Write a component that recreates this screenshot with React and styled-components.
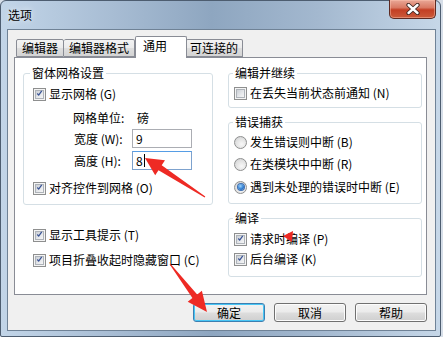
import React from 'react';
import styled, { createGlobalStyle } from 'styled-components';

const GlobalStyle = createGlobalStyle`
	html, body {
		margin: 0;
		padding: 0;
		background: #d6dee8;
	}
	body {
		font-family: "Noto Sans CJK SC", "Liberation Sans", sans-serif;
		font-size: 12px;
		color: #000;
	}
`;

const Stage = styled.div`
	position: relative;
	width: 443px;
	height: 337px;
	overflow: hidden;
`;

const Window = styled.div`
	width: 441px;
	height: 337px;
	box-sizing: border-box;
	display: flex;
	flex-direction: column;
	border: 1px solid #4d5d70;
	border-radius: 6px 6px 2px 2px;
	padding: 0 4px 5px 6px;
	background: linear-gradient(90deg, #c2d5e8 0%, #a8bdd4 25%, #8ea6c0 48%, #a3b8cf 72%, #c6d7e8 100%);
`;

const TitleBar = styled.div`
	height: 28px;
	display: flex;
	justify-content: space-between;
	align-items: flex-start;
	flex-shrink: 0;
`;

const Title = styled.span`
	margin-top: 6px;
	padding-left: 1px;
	font-size: 12px;
	line-height: 16px;
	color: #000;
	text-shadow: 0 0 6px rgba(255, 255, 255, 0.9);
`;

const CloseButton = styled.div`
	width: 47px;
	height: 19px;
	margin-top: -1px;
	box-sizing: border-box;
	display: flex;
	align-items: center;
	justify-content: center;
	border: 1px solid #5d2a22;
	border-top: none;
	border-radius: 0 0 5px 5px;
	background: linear-gradient(180deg, #e9a897 0%, #d97a64 42%, #c33f24 55%, #cb5a3a 100%);
	box-shadow: inset 0 0 0 1px rgba(255, 200, 180, 0.45);
`;

const Client = styled.div`
	flex: 1;
	display: flex;
	flex-direction: column;
	border: 1px solid #6f8296;
	background: #f0f0f0;
	padding: 6px 8px 0 6px;
`;

const TabStrip = styled.div`
	display: flex;
	align-items: flex-end;
	height: 22px;
	margin-left: 2px;
`;

const Tab = styled.div`
	position: relative;
	width: ${p => p.w}px;
	height: ${p => (p.active ? 22 : 18)}px;
	margin-bottom: ${p => (p.active ? 0 : 1)}px;
	box-sizing: border-box;
	display: flex;
	align-items: center;
	padding-left: ${p => p.pad}px;
	border: 1px solid #898c95;
	border-bottom: ${p => (p.active ? 'none' : '1px solid #898c95')};
	border-left: ${p => (p.first || p.active ? '1px solid #898c95' : 'none')};
	border-radius: 2px 2px 0 0;
	background: ${p => (p.active ? '#fff' : 'linear-gradient(180deg, #f3f3f3 0%, #ebebeb 50%, #dedede 52%, #d4d4d4 100%)')};
	z-index: ${p => (p.active ? 2 : 1)};
	margin-right: ${p => (p.active ? -1 : 0)}px;
	padding-bottom: ${p => (p.active ? 3 : 0)}px;
	line-height: 14px;
	white-space: nowrap;
`;

const Panel = styled.div`
	height: 238px;
	box-sizing: border-box;
	margin-top: -1px;
	border: 1px solid #898c95;
	background: #fff;
	padding: 8px 4px 0 8px;
	display: grid;
	grid-template-columns: 190px 194px;
	column-gap: 15px;
	align-items: start;
`;

const Column = styled.div`
	display: flex;
	flex-direction: column;
`;

const Group = styled.fieldset`
	margin: ${p => p.gap || 0}px 0 0 0;
	padding: 0 0 ${p => p.bottom}px ${p => p.inset}px;
	min-width: 0;
	border: 1px solid #d5dfe5;
	border-radius: 3px;
`;

const Legend = styled.legend`
	padding: 0 2px;
	margin-left: ${p => p.shift}px;
	line-height: 14px;
	font-size: 12px;
`;

const Row = styled.div`
	display: flex;
	align-items: center;
	height: ${p => p.h || 20}px;
	margin-top: ${p => p.top || 0}px;
	padding-left: ${p => p.indent || 0}px;
	white-space: nowrap;
	line-height: 14px;
`;

const Free = styled.div`
	display: flex;
	flex-direction: column;
	padding-left: 10px;
`;

const Box = styled.span`
	width: 13px;
	height: 13px;
	box-sizing: border-box;
	flex-shrink: 0;
	display: flex;
	align-items: center;
	justify-content: center;
	border: 1px solid #8e8f8f;
	background: #f4f4f4;
	margin-right: 3px;
`;

const BoxInner = styled.span`
	width: 9px;
	height: 9px;
	display: flex;
	align-items: center;
	justify-content: center;
	border: 1px solid #aeb3b9;
	box-sizing: border-box;
	background: linear-gradient(135deg, #cbcfd5 0%, #e7e9ec 60%, #f6f6f6 100%);
	overflow: visible;
`;

const Radio = styled.span`
	width: 13px;
	height: 13px;
	box-sizing: border-box;
	flex-shrink: 0;
	border-radius: 50%;
	border: 1px solid #8e8f8f;
	background: radial-gradient(circle at 60% 65%, #f8f8f8 0%, #e2e2e2 55%, #c9cbce 100%);
	margin-right: 3px;
	display: flex;
	align-items: center;
	justify-content: center;
`;

const RadioDot = styled.span`
	width: 6px;
	height: 6px;
	border-radius: 50%;
	background: radial-gradient(circle at 40% 35%, #9fd3fb 0%, #2f7fd4 55%, #1c4f9a 100%);
	box-shadow: 0 0 0 1px #3e6fb2;
`;

const FieldLabel = styled.span`
	width: ${p => p.w}px;
	flex-shrink: 0;
`;

const Input = styled.div`
	width: 60px;
	height: 19px;
	box-sizing: border-box;
	display: flex;
	align-items: center;
	padding-left: 3px;
	border: 1px solid ${p => (p.focus ? '#7da2ce' : '#abadb3')};
	border-top-color: ${p => (p.focus ? '#569de5' : '#abadb3')};
	background: #fff;
`;

const Caret = styled.span`
	width: 1px;
	height: 13px;
	background: #000;
	margin-left: 1px;
`;

const ButtonBar = styled.div`
	display: flex;
	justify-content: flex-end;
	gap: 9px;
	margin-top: 8px;
`;

const Button = styled.div`
	width: 72px;
	height: 19px;
	box-sizing: border-box;
	display: flex;
	align-items: center;
	justify-content: center;
	border: 1px solid ${p => (p.primary ? '#3c7fb1' : '#707070')};
	border-radius: 3px;
	background: linear-gradient(180deg, #f2f2f2 0%, #ebebeb 48%, #dddddd 52%, #cfcfcf 100%);
	box-shadow: ${p => (p.primary ? 'inset 0 0 0 1px #48c6f5' : 'inset 0 0 0 1px #fcfcfc')};
	line-height: 14px;
`;

const Overlay = styled.svg`
	position: absolute;
	top: 0;
	left: 0;
	pointer-events: none;
`;

const Check = ({ on }) => (
	<Box>
		<BoxInner>
			{on ? (
				<svg width="11" height="11" viewBox="0 0 11 11" style={{ marginTop: '-2px' }}>
					<path d="M2 5.5 L4.3 8 L9 1.5" fill="none" stroke="#3a5495" strokeWidth="2" />
				</svg>
			) : null}
		</BoxInner>
	</Box>
);

const CheckRow = ({ on, top, children }) => (
	<Row top={top}>
		<Check on={on} />
		{children}
	</Row>
);

const RadioRow = ({ on, top, children }) => (
	<Row top={top}>
		<Radio>{on ? <RadioDot /> : null}</Radio>
		{children}
	</Row>
);

const tabs = [
	{ label: '编辑器', w: 48, pad: 5, first: true },
	{ label: '编辑器格式', w: 71, pad: 5 },
	{ label: '通用', w: 52, pad: 7, active: true },
	{ label: '可连接的', w: 57, pad: 4 }
];

export default function App() {
	return (
		<Stage>
			<GlobalStyle />
			<Window>
				<TitleBar>
					<Title>选项</Title>
					<CloseButton>
						<svg width="14" height="12" viewBox="0 0 14 12">
							<path d="M2.5 2 L11.5 10 M11.5 2 L2.5 10" stroke="#3b2420" strokeWidth="4.2" strokeLinecap="round" />
							<path d="M2.5 2 L11.5 10 M11.5 2 L2.5 10" stroke="#fff" strokeWidth="2.4" strokeLinecap="round" />
						</svg>
					</CloseButton>
				</TitleBar>
				<Client>
					<TabStrip>
						{tabs.map(t => (
							<Tab key={t.label} w={t.w} pad={t.pad} first={t.first} active={t.active}>
								{t.label}
							</Tab>
						))}
					</TabStrip>
					<Panel>
						<Column>
							<Group inset={9} bottom={6}>
								<Legend shift={-3}>窗体网格设置</Legend>
								<CheckRow on top={4}>显示网格 (G)</CheckRow>
								<Row top={4} indent={40}>
									<FieldLabel w={64}>网格单位:</FieldLabel>
									磅
								</Row>
								<Row top={1} h={19} indent={41}>
									<FieldLabel w={58}>宽度 (W):</FieldLabel>
									<Input>9</Input>
								</Row>
								<Row top={3} h={19} indent={41}>
									<FieldLabel w={58}>高度 (H):</FieldLabel>
									<Input focus>8<Caret /></Input>
								</Row>
								<CheckRow on top={8}>对齐控件到网格 (O)</CheckRow>
							</Group>
							<Free>
								<CheckRow on top={20}>显示工具提示 (T)</CheckRow>
								<CheckRow on top={5}>项目折叠收起时隐藏窗口 (C)</CheckRow>
							</Free>
						</Column>
						<Column>
							<Group inset={5} bottom={4}>
								<Legend shift={-1}>编辑并继续</Legend>
								<CheckRow top={3}>在丢失当前状态前通知 (N)</CheckRow>
							</Group>
							<Group inset={5} bottom={6} gap={7}>
								<Legend shift={-1}>错误捕获</Legend>
								<RadioRow top={3}>发生错误则中断 (B)</RadioRow>
								<RadioRow top={2}>在类模块中中断 (R)</RadioRow>
								<RadioRow on top={3}>遇到未处理的错误时中断 (E)</RadioRow>
							</Group>
							<Group inset={5} bottom={7} gap={7}>
								<Legend shift={-1}>编译</Legend>
								<CheckRow on top={4}>请求时编译 (P)</CheckRow>
								<CheckRow on top={0}>后台编译 (K)</CheckRow>
							</Group>
						</Column>
					</Panel>
					<ButtonBar>
						<Button primary>确定</Button>
						<Button>取消</Button>
						<Button>帮助</Button>
					</ButtonBar>
				</Client>
			</Window>
			<Overlay width="443" height="337" viewBox="0 0 443 337">
				<polygon
					fill="#ee2a24"
					points="145,158 165,160.3 161.7,165.3 205.3,196.6 204.7,197.4 158.5,170.3 155.2,175.3"
				/>
				<polygon
					fill="#ee2a24"
					points="207,312 201.9,290.7 197.2,294.4 170.4,263.7 169.6,264.3 192.4,298 187.7,301.7"
				/>
				<polygon fill="#ee2a24" points="283,236 293,231 292,242" />
			</Overlay>
		</Stage>
	);
}
